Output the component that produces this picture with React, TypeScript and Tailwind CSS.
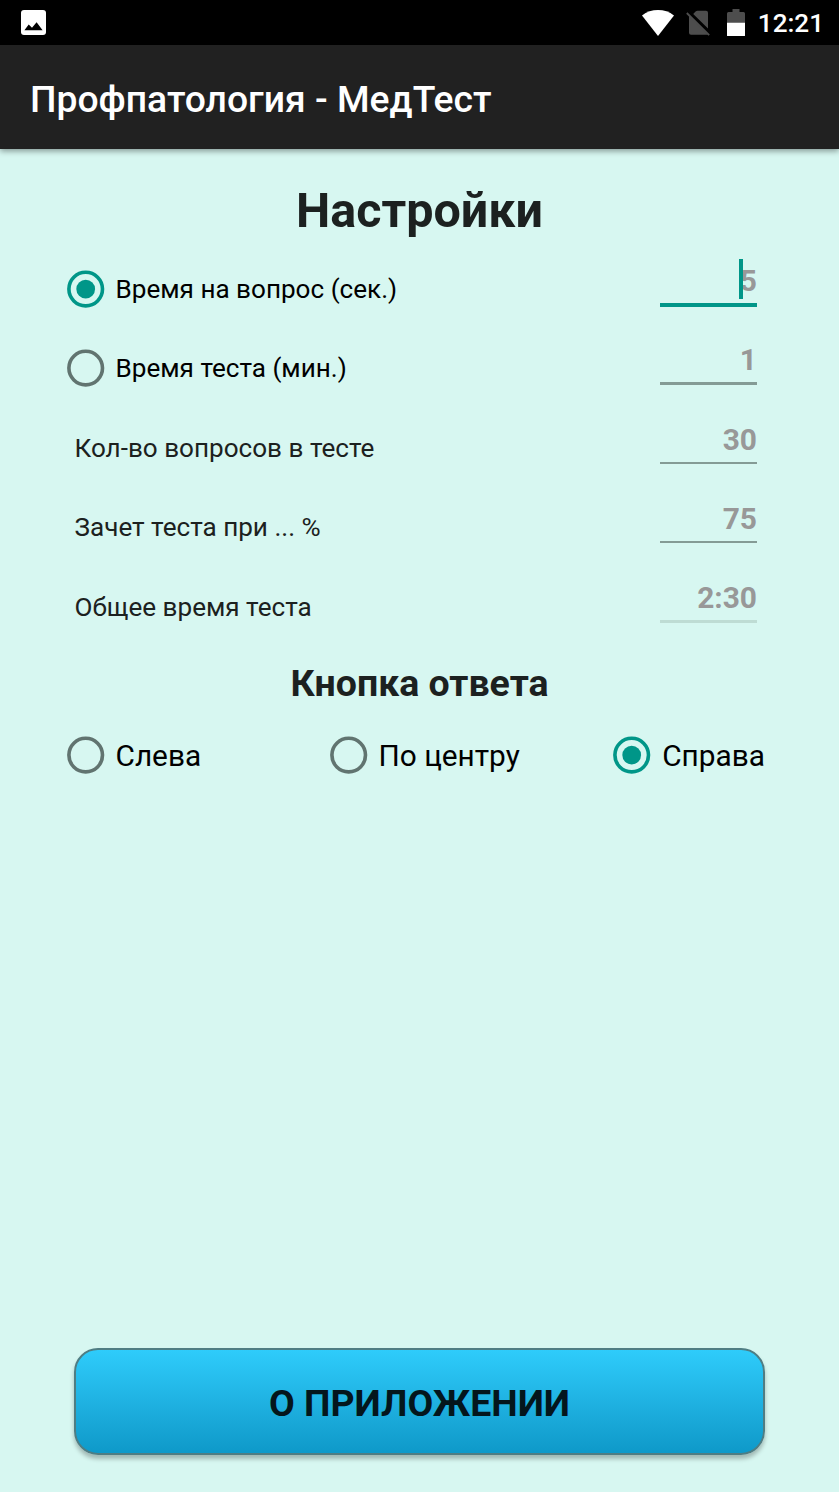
import clsx from "clsx";

interface RadioProps {
  label: string;
  checked?: boolean;
  className?: string;
}

function Radio({ label, checked, className }: RadioProps) {
  return (
    <label className={clsx("flex items-center gap-[11px] text-black", className)}>
      <svg
        viewBox="0 0 38 38"
        className={clsx("size-[38px] shrink-0", checked ? "text-[#009688]" : "text-[#617470]")}
      >
        <circle cx="18.7" cy="19.1" r="16.8" fill="none" stroke="currentColor" strokeWidth="3.6" />
        {checked && <circle cx="18.7" cy="19.1" r="9.4" fill="currentColor" />}
      </svg>
      <span className="mt-[2px] whitespace-nowrap">{label}</span>
    </label>
  );
}

interface Setting {
  label: string;
  value: string;
  radio?: boolean;
  active?: boolean;
  disabled?: boolean;
}

const settings: Setting[] = [
  { label: "Время на вопрос (сек.)", value: "5", radio: true, active: true },
  { label: "Время теста (мин.)", value: "1", radio: true },
  { label: "Кол-во вопросов в тесте", value: "30" },
  { label: "Зачет теста при ... %", value: "75" },
  { label: "Общее время теста", value: "2:30", disabled: true },
];

function SettingRow({ label, value, radio, active, disabled }: Setting) {
  return (
    <div className="flex h-[79.3px] items-center justify-between pr-[82px] pl-[66.5px]">
      {radio ? (
        <Radio label={label} checked={active} className="text-[26.1px]" />
      ) : (
        <span className="mt-[3px] pl-[8px] text-[26.1px] text-[#1c2120]">{label}</span>
      )}
      <div className="flex h-[79.3px] w-[97px] flex-col pt-[10px]">
        <div className="relative flex h-[41px] items-center justify-end pt-[4px] text-[29.9px] font-bold text-[#989898]">
          {active && <span className="absolute top-0 right-[14px] h-[40px] w-[4px] bg-[#009688]" />}
          {value}
        </div>
        <div
          className={clsx(
            active && "mt-[3px] h-[4px] bg-[#009688]",
            !active && "mt-[3px] h-[2.5px]",
            !active && (disabled ? "bg-[#bedcd4]" : "bg-[#849b95]"),
          )}
        />
      </div>
    </div>
  );
}

function StatusBar() {
  return (
    <div className="flex h-[45px] items-center justify-between bg-black pr-[15px] pl-[21px] text-white">
      <svg viewBox="0 0 25 25" className="size-[25px]">
        <rect width="25" height="25" rx="3" fill="currentColor" />
        <path d="M3.4 20.2 7.7 14.4 11 17.8 15.6 12.2 21.6 20.2Z" fill="#000" />
      </svg>
      <div className="flex h-full items-center">
        <svg viewBox="0 0 32 26" className="mr-[12px] h-[26px] w-[32px]">
          <path d="M0 5.5C9-1.7 23-1.7 32 5.5L16 26Z" fill="currentColor" />
        </svg>
        <svg viewBox="0 0 24 26" className="mr-[17px] h-[26px] w-[24px] text-[#4d4d4d]">
          <path
            d="M7.2 4 9.6 1.6Q10.4.8 11.5.8H20Q22 .8 22 2.8V18.6ZM3 5.2 22 24.4Q21.4 24.8 20.4 24.8H5Q3 24.8 3 22.8Z"
            fill="currentColor"
          />
          <path d="M.8 3 23.2 25.2" stroke="currentColor" strokeWidth="1.8" />
        </svg>
        <svg viewBox="0 0 18 27" className="mr-[13px] h-[27px] w-[18px]">
          <path d="M5.5 0H12.5V3H16.5Q18 3 18 4.5V14H0V4.5Q0 3 1.5 3H5.5Z" fill="#4d4d4d" />
          <path d="M0 13.7H18V26.5Q18 27 17.5 27H.5Q0 27 0 26.5Z" fill="currentColor" />
        </svg>
        <span className="mt-[2px] text-[26.1px] font-medium">12:21</span>
      </div>
    </div>
  );
}

export default function App() {
  return (
    <div className="flex h-[1492px] w-[839px] flex-col overflow-hidden bg-[#d7f7f1] font-['Roboto',sans-serif]">
      <StatusBar />
      <header className="flex h-[104px] items-center bg-[#212121] px-[30px] pt-[5px] shadow-[0_2px_6px_rgba(0,0,0,0.4)]">
        <span className="text-[37.3px] font-medium whitespace-nowrap text-white">Профпатология - МедТест</span>
      </header>

      <main className="flex flex-1 flex-col text-[#1c2120]">
        <h1 className="flex h-[100px] items-center justify-center pt-[24px] text-[48.5px] font-bold">
          Настройки
        </h1>
        {settings.map((setting) => (
          <SettingRow key={setting.label} {...setting} />
        ))}

        <h2 className="flex h-[75px] items-center justify-center pt-[1px] text-[37.5px] font-bold">Кнопка ответа</h2>
        <div className="flex h-[69px] items-center pr-[74px] pl-[66.5px] text-[29.8px]">
          <Radio label="Слева" className="w-[263px]" />
          <Radio label="По центру" />
          <Radio label="Справа" checked className="ml-auto" />
        </div>

        <button className="mx-[74px] mt-auto mb-[37px] h-[107px] rounded-[24px] border-2 border-[#4f7d83] bg-linear-to-b from-[#2fcdfc] to-[#0d98c8] bg-origin-border pt-[4px] text-[37.4px] font-bold text-[#04161c] shadow-[0_4px_4px_rgba(0,0,0,0.25)]">
          О ПРИЛОЖЕНИИ
        </button>
      </main>
    </div>
  );
}
